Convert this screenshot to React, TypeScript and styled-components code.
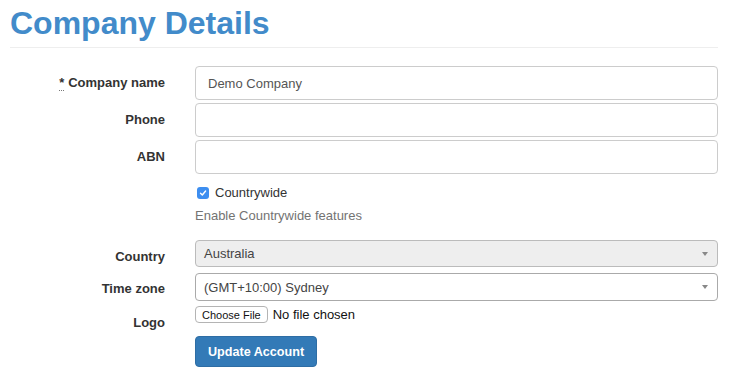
import styled, { createGlobalStyle } from "styled-components";

const GlobalStyle = createGlobalStyle`
  html, body {
    margin: 0;
    padding: 0;
    background: #fff;
    font-family: "Liberation Sans", Arial, Helvetica, sans-serif;
    color: #333;
  }
`;

const Page = styled.div`
  width: 729px;
  height: 391px;
  padding: 0 11px 0 10px;
  box-sizing: border-box;
  overflow: hidden;
`;

const Title = styled.h1`
  margin: 0;
  padding-top: 3px;
  font-size: 32px;
  line-height: 40px;
  font-weight: bold;
  color: #428bca;
  padding-bottom: 4px;
  border-bottom: 1px solid #eee;
`;

const Form = styled.form`
  display: flex;
  flex-direction: column;
  margin-top: 18px;
`;

const Row = styled.div<{ gap?: number; top?: boolean }>`
  display: grid;
  grid-template-columns: 155px 1fr;
  column-gap: 30px;
  align-items: ${({ top }) => (top ? "start" : "center")};
  margin-bottom: ${({ gap }) => gap ?? 3}px;
`;

const Label = styled.label<{ pad?: number }>`
  text-align: right;
  font-size: 13px;
  font-weight: bold;
  line-height: 20px;
  padding-top: ${({ pad }) => pad ?? 0}px;
`;

const Required = styled.abbr`
  text-decoration: none;
  border-bottom: 1px dotted #777;
  cursor: help;
  margin-right: 4px;
`;

const Input = styled.input`
  box-sizing: border-box;
  width: 100%;
  height: 34px;
  padding: 0 12px;
  border: 1px solid #ccc;
  border-radius: 4px;
  font-family: inherit;
  font-size: 13px;
  color: #555;
  background: #fff;
  outline: none;
`;

const CheckWrap = styled.div`
  grid-column: 2;
  display: flex;
  flex-direction: column;
`;

const CheckLine = styled.label`
  display: flex;
  align-items: center;
  gap: 6px;
  font-size: 13px;
  line-height: 20px;
  padding-left: 2px;
`;

const CheckBox = styled.span`
  width: 12px;
  height: 12px;
  border-radius: 3px;
  background: #3d8ef0;
  display: inline-flex;
  align-items: center;
  justify-content: center;
`;

const Help = styled.p`
  margin: 3px 0 0;
  font-size: 13px;
  line-height: 20px;
  color: #737373;
`;

const Select = styled.div<{ disabled?: boolean; h: number }>`
  box-sizing: border-box;
  height: ${({ h }) => h}px;
  display: flex;
  align-items: center;
  justify-content: space-between;
  padding: 0 8px 0 8px;
  border: 1px solid ${({ disabled }) => (disabled ? "#bbb" : "#aaa")};
  border-radius: 4px;
  background: ${({ disabled }) => (disabled ? "#eee" : "#fff")};
  font-size: 13px;
  color: #444;
`;

const Arrow = styled.span`
  width: 0;
  height: 0;
  border-left: 3px solid transparent;
  border-right: 3px solid transparent;
  border-top: 4px solid #888;
  margin-right: 1px;
`;

const FileLine = styled.div`
  display: flex;
  align-items: center;
  gap: 5px;
`;

const FileButton = styled.button`
  height: 17px;
  padding: 0 6px;
  border: 1px solid #b4b4b4;
  border-radius: 4px;
  background: #fff;
  font-family: inherit;
  font-size: 11px;
  color: #111;
`;

const FileText = styled.span`
  font-size: 13px;
  color: #111;
`;

const Submit = styled.button`
  grid-column: 2;
  justify-self: start;
  height: 31px;
  padding: 0 12px;
  border: 1px solid #2e6da4;
  border-radius: 4px;
  background: #337ab7;
  color: #fff;
  font-family: inherit;
  font-size: 12.6px;
  font-weight: bold;
`;

export default function App() {
  return (
    <Page>
      <GlobalStyle />
      <Title>Company Details</Title>
      <Form onSubmit={(e) => e.preventDefault()}>
        <Row>
          <Label>
            <Required title="required">*</Required>Company name
          </Label>
          <Input defaultValue="Demo Company" />
        </Row>
        <Row>
          <Label>Phone</Label>
          <Input />
        </Row>
        <Row gap={9}>
          <Label>ABN</Label>
          <Input />
        </Row>
        <Row gap={14}>
          <CheckWrap>
            <CheckLine>
              <CheckBox>
                <svg width="8" height="8" viewBox="0 0 8 8">
                  <path d="M1.5 4.2 L3.3 6 L6.6 2" fill="none" stroke="#fff" strokeWidth="1.4" strokeLinecap="round" strokeLinejoin="round" />
                </svg>
              </CheckBox>
              Countrywide
            </CheckLine>
            <Help>Enable Countrywide features</Help>
          </CheckWrap>
        </Row>
        <Row top gap={6}>
          <Label pad={7}>Country</Label>
          <Select disabled h={27}>
            Australia
            <Arrow />
          </Select>
        </Row>
        <Row top gap={5}>
          <Label pad={6}>Time zone</Label>
          <Select h={28}>
            (GMT+10:00) Sydney
            <Arrow />
          </Select>
        </Row>
        <Row top gap={3}>
          <Label pad={7}>Logo</Label>
          <FileLine>
            <FileButton type="button">Choose File</FileButton>
            <FileText>No file chosen</FileText>
          </FileLine>
        </Row>
        <Row>
          <Submit type="submit">Update Account</Submit>
        </Row>
      </Form>
    </Page>
  );
}
